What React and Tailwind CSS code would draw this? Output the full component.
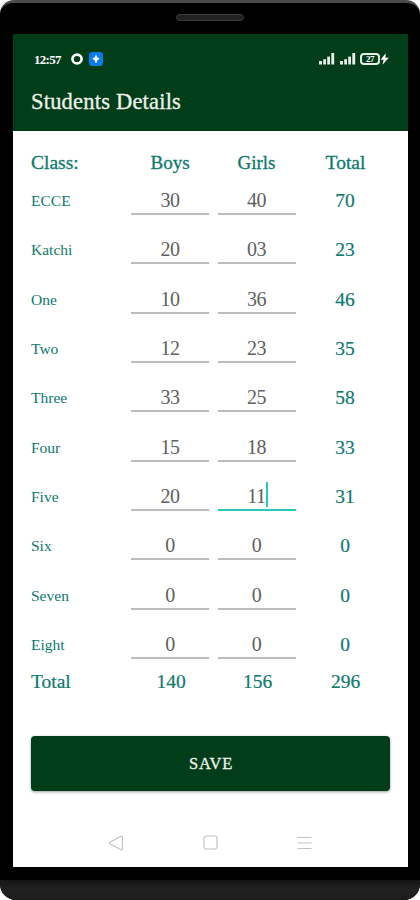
import React from 'react';

const rows = [
  { name: 'ECCE', boys: '30', girls: '40', total: '70' },
  { name: 'Katchi', boys: '20', girls: '03', total: '23' },
  { name: 'One', boys: '10', girls: '36', total: '46' },
  { name: 'Two', boys: '12', girls: '23', total: '35' },
  { name: 'Three', boys: '33', girls: '25', total: '58' },
  { name: 'Four', boys: '15', girls: '18', total: '33' },
  { name: 'Five', boys: '20', girls: '11', total: '31', focused: true },
  { name: 'Six', boys: '0', girls: '0', total: '0' },
  { name: 'Seven', boys: '0', girls: '0', total: '0' },
  { name: 'Eight', boys: '0', girls: '0', total: '0' },
];

const Signal = () => (
  <svg width="16" height="12" viewBox="0 0 16 12" fill="#e6ece6">
    <rect x="0" y="8" width="3" height="3.5" />
    <rect x="4.2" y="6.2" width="2.8" height="5.3" />
    <rect x="8.2" y="3.6" width="2.8" height="7.9" />
    <rect x="12.3" y="0" width="2.9" height="11.5" />
  </svg>
);

const StatusBar = () => (
  <div className="flex h-[50px] items-center pl-[21px] pr-[19px] text-white">
    <span className="w-[27px] text-[13px] font-bold leading-none tracking-[-0.7px]">12:57</span>
    <svg className="ml-[10px]" width="12" height="12" viewBox="0 0 12 12">
      <ellipse cx="6" cy="6" rx="4.6" ry="4.4" fill="none" stroke="#fff" strokeWidth="2.6" />
    </svg>
    <svg className="ml-[6px]" width="14" height="14" viewBox="0 0 14 14">
      <rect width="14" height="14" rx="3.5" fill="#0b7bf2" />
      <path d="M7 2.5 8.2 5.2 10.8 6.7 8.2 8.2 7.5 11h-1L5.8 8.2 3.2 6.7 5.8 5.2Z" fill="#fff" />
    </svg>
    <div className="ml-auto flex items-center">
      <Signal />
      <span className="ml-[5px] flex">
        <Signal />
      </span>
      <div className="ml-[4px] flex h-[12px] w-[20px] items-center justify-center rounded-[4px] border-2 border-[#e6ece6] text-[9px] font-bold leading-none tracking-[-0.5px]">
        27
      </div>
      <svg width="9" height="12" viewBox="0 0 9 12">
        <path d="M5.6 0.3 0.6 6.8h3L2.6 11.7 8.8 4.8H5.5Z" fill="#fff" />
      </svg>
    </div>
  </div>
);

const Field = ({ value, focused }) => (
  <div
    className={`flex h-7 w-[78px] items-start justify-center border-b-2 text-[20px] leading-[27px] tracking-[-0.4px] text-[#606060] ${
      focused ? 'border-[#26cbb8]' : 'border-[#bcbcbc]'
    }`}
  >
    {value}
    {focused && <span className="-mr-0.5 -mt-px h-[25px] w-0.5 bg-[#26cbb8]" />}
  </div>
);

const App = () => {
  return (
    <div className="h-[900px] w-[420px] bg-white font-['Liberation_Serif',serif]">
      <div className="flex h-[900px] flex-col overflow-hidden rounded-t-[14px] rounded-b-[16px] border-t-[3px] border-[#4b4b4b] bg-black">
        <div className="flex h-[31px] shrink-0 justify-center pt-[11px]">
          <div className="h-[7px] w-[68px] rounded-full border border-[#3c3c3c] bg-[#222]" />
        </div>

        <div className="ml-[13px] flex h-[833px] w-[395px] shrink-0 flex-col bg-white">
          <header className="h-[96.5px] shrink-0 bg-[#023d1a]">
            <StatusBar />
            <h1 className="pl-[18px] pt-[4px] text-[22.5px] leading-7 tracking-[0.2px] text-[#eef3ea] [-webkit-text-stroke:0.3px]">
              Students Details
            </h1>
          </header>

          <main className="pl-[18px] text-[19.5px] text-[#0d7a6c]">
            <div className="mt-[20.5px] grid h-6 grid-cols-[100px_78px_78px_99px] leading-6 [-webkit-text-stroke:0.3px]">
              <span>Class:</span>
              <span className="text-center text-[19px]">Boys</span>
              <span className="pl-[17px] text-center text-[19px]">Girls</span>
              <span className="pl-[18px] text-center">Total</span>
            </div>

            <div className="mt-3 flex flex-col gap-[21.35px]">
              {rows.map((row) => (
                <div key={row.name} className="flex h-7">
                  <span className="w-[100px] text-[15.5px] leading-[27px]">{row.name}</span>
                  <Field value={row.boys} />
                  <span className="w-[8.5px]" />
                  <Field value={row.girls} focused={row.focused} />
                  <span className="w-[99px] text-center leading-[27px] [-webkit-text-stroke:0.2px]">{row.total}</span>
                </div>
              ))}
            </div>

            <div className="mt-[11px] flex h-6 leading-6 [-webkit-text-stroke:0.2px]">
              <span className="w-[100px]">Total</span>
              <span className="w-[80px] text-center">140</span>
              <span className="w-[93px] text-center">156</span>
              <span className="w-[83px] text-center">296</span>
            </div>

            <button className="mt-[42px] h-[55px] w-[359px] rounded-[4px] bg-[#023d1a] pl-px pt-0.5 text-[16.5px] tracking-[0.8px] text-[#eef3ea] shadow-[0_1px_3px_rgba(0,0,0,0.4)] [-webkit-text-stroke:0.3px]">
              SAVE
            </button>
          </main>

          <nav className="mt-auto flex h-[49px] items-center pl-[95px]">
            <svg width="16" height="16" viewBox="0 0 16 16" fill="none" stroke="#c4c4c4" strokeWidth="1.2" strokeLinejoin="round">
              <path d="M13 1.2 1.8 7.3Q1 8 1.8 8.7L13 14.8Q14.2 15 14.4 13.8V2.2Q14.2 1 13 1.2Z" />
            </svg>
            <svg className="ml-[79px]" width="15" height="15" viewBox="0 0 15 15" fill="none" stroke="#c4c4c4" strokeWidth="1.2">
              <rect x="1" y="1" width="13" height="13" rx="2.5" />
            </svg>
            <svg className="ml-[79px]" width="15" height="14" viewBox="0 0 15 14" stroke="#c4c4c4" strokeWidth="1.2">
              <path d="M0.5 1.5h14M0.5 7h14M0.5 12.5h14" />
            </svg>
          </nav>
        </div>

        <div className="mt-[13px] flex-1 bg-linear-to-b from-[#151515] via-[#222] to-[#1c1c1c]" />
      </div>
    </div>
  );
};

export default App;
